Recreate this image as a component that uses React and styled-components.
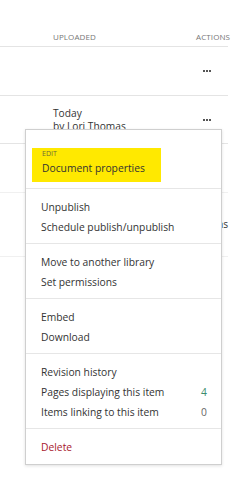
import React from 'react';
import styled, { createGlobalStyle } from 'styled-components';

const GlobalStyle = createGlobalStyle`
  body {
    margin: 0;
    background: #ffffff;
    font-family: "Open Sans", "Liberation Sans", sans-serif;
    color: #333333;
  }
`;

const Page = styled.div`
  position: relative;
  width: 245px;
  height: 480px;
  overflow: hidden;
  background: #ffffff;
`;

const Table = styled.div`
  width: 228px;
  display: flex;
  flex-direction: column;
`;

const Row = styled.div`
  display: grid;
  grid-template-columns: 53px 143px 32px;
  height: ${(p) => p.h}px;
  border-bottom: 1px solid ${(p) => (p.faint ? '#f0f0f0' : '#e4e4e4')};
  box-sizing: border-box;
`;

const HeadCell = styled.div`
  font-size: 8px;
  color: #777777;
  letter-spacing: 0.1px;
  align-self: end;
  padding-bottom: 4px;
  white-space: nowrap;
`;

const Cell = styled.div`
  display: flex;
  flex-direction: column;
  align-items: ${(p) => (p.right ? 'flex-end' : 'flex-start')};
  font-size: 10.2px;
  line-height: 12.5px;
  color: #333333;
  align-self: center;
  white-space: nowrap;
`;

const Dots = styled.div`
  display: flex;
  gap: 1px;
  align-self: center;
  padding-left: 7px;
  span {
    width: 2px;
    height: 2px;
    background: #555555;
  }
`;

const Menu = styled.div`
  position: absolute;
  left: 25px;
  top: 129px;
  width: 197px;
  box-sizing: border-box;
  background: #ffffff;
  border: 1px solid #cfcfcf;
  box-shadow: 0 1px 3px rgba(0, 0, 0, 0.12);
`;

const Section = styled.div`
  padding: ${(p) => p.pad || '8px 0 6px'};
  border-bottom: ${(p) => (p.last ? 'none' : '1px solid #e6e6e6')};
`;

const Highlight = styled.div`
  margin-left: 6px;
  width: 119px;
  height: 34px;
  padding-left: 10px;
  background: #ffe900;
  display: flex;
  flex-direction: column;
`;

const Label = styled.div`
  font-size: 7px;
  line-height: 9px;
  padding-top: 1px;
  color: #6a6a3a;
`;

const Item = styled.div`
  display: flex;
  justify-content: space-between;
  align-items: center;
  height: 20px;
  padding: 0 14px 0 ${(p) => (p.flush ? 0 : 15)}px;
  font-size: 10.3px;
  color: ${(p) => (p.danger ? '#a8192e' : '#333333')};
  white-space: nowrap;
`;

const Count = styled.span`
  color: ${(p) => (p.accent ? '#3b8c6e' : '#666666')};
`;

export default function App() {
  return (
    <Page>
      <GlobalStyle />
      <Table>
        <Row h={47}>
          <div />
          <HeadCell>UPLOADED</HeadCell>
          <HeadCell>ACTIONS</HeadCell>
        </Row>
        <Row h={49}>
          <div />
          <div />
          <Dots><span /><span /><span /></Dots>
        </Row>
        <Row h={48}>
          <div />
          <Cell><span>Today</span><span>by Lori Thomas</span></Cell>
          <Dots><span /><span /><span /></Dots>
        </Row>
        <Row h={49} faint>
          <div />
          <div />
          <div />
        </Row>
        <Row h={64} faint>
          <div />
          <div />
          <Cell right><span>Versions</span></Cell>
        </Row>
      </Table>

      <Menu>
        <Section pad="18px 0 6px">
          <Highlight>
            <Label>EDIT</Label>
            <Item flush>Document properties</Item>
          </Highlight>
        </Section>
        <Section>
          <Item>Unpublish</Item>
          <Item>Schedule publish/unpublish</Item>
        </Section>
        <Section>
          <Item>Move to another library</Item>
          <Item>Set permissions</Item>
        </Section>
        <Section>
          <Item>Embed</Item>
          <Item>Download</Item>
        </Section>
        <Section>
          <Item>Revision history</Item>
          <Item>Pages displaying this item<Count accent>4</Count></Item>
          <Item>Items linking to this item<Count>0</Count></Item>
        </Section>
        <Section pad="8px 0 7px" last>
          <Item danger>Delete</Item>
        </Section>
      </Menu>
    </Page>
  );
}
